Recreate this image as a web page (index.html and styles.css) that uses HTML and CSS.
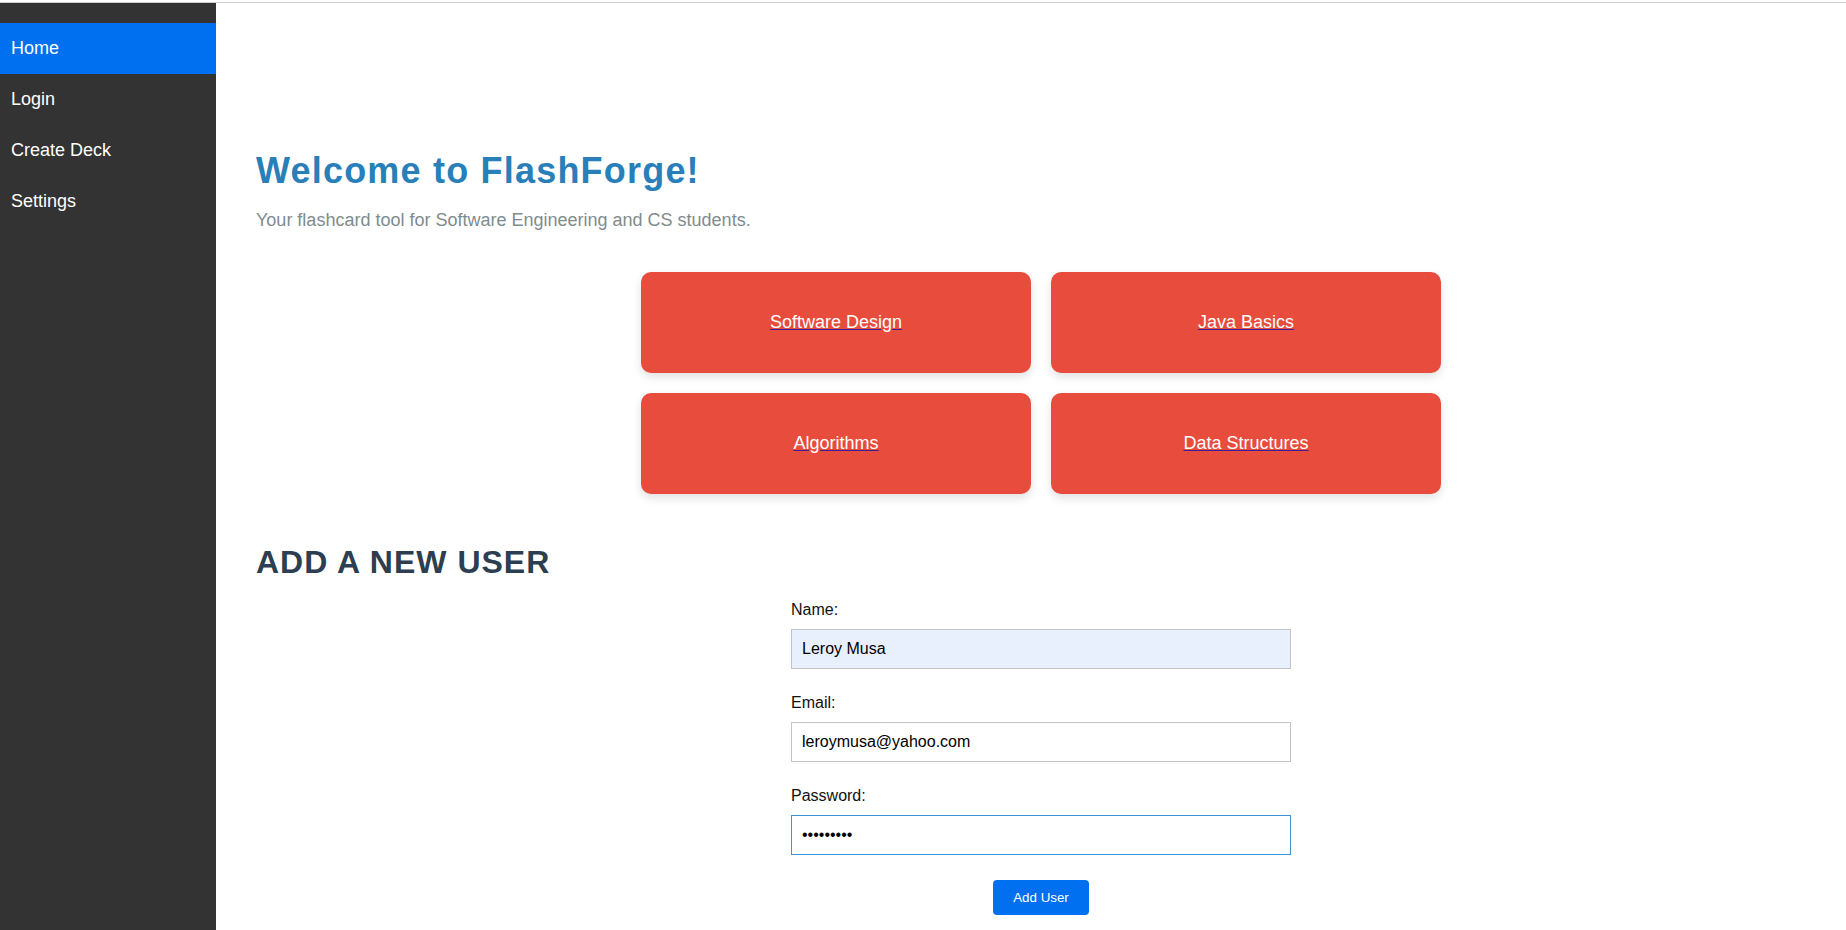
FILE: index.html
```html
<!DOCTYPE html>
<html lang="en">
<head>
<meta charset="utf-8">
<title>FlashForge</title>
<link rel="stylesheet" href="styles.css">
</head>
<body>
<div class="topline"></div>
<div class="layout">
  <nav class="sidebar">
    <a class="nav-item active" href="#">Home</a>
    <a class="nav-item" href="#">Login</a>
    <a class="nav-item" href="#">Create Deck</a>
    <a class="nav-item" href="#">Settings</a>
  </nav>
  <main class="main">
    <h1 class="title">Welcome to FlashForge!</h1>
    <p class="subtitle">Your flashcard tool for Software Engineering and CS students.</p>
    <div class="deck-grid">
      <a class="deck" href="#"><span class="deck-label">Software Design</span></a>
      <a class="deck" href="#"><span class="deck-label">Java Basics</span></a>
      <a class="deck" href="#"><span class="deck-label">Algorithms</span></a>
      <a class="deck" href="#"><span class="deck-label">Data Structures</span></a>
    </div>
    <h2 class="section-title">ADD A NEW USER</h2>
    <form class="user-form">
      <div class="form-group">
        <label class="form-label" for="name">Name:</label>
        <input class="form-input autofilled" id="name" type="text" value="Leroy Musa">
      </div>
      <div class="form-group">
        <label class="form-label" for="email">Email:</label>
        <input class="form-input" id="email" type="email" value="leroymusa@yahoo.com">
      </div>
      <div class="form-group">
        <label class="form-label" for="password">Password:</label>
        <input class="form-input focused" id="password" type="password" value="secret123">
      </div>
      <div class="form-actions">
        <button class="btn" type="button">Add User</button>
      </div>
    </form>
  </main>
</div>
</body>
</html>
```

FILE: styles.css
```css
* { box-sizing: border-box; }

html, body {
  margin: 0;
  padding: 0;
  background: #fff;
  font-family: "Liberation Sans", Arial, sans-serif;
}

.topline {
  height: 3px;
  border-bottom: 1px solid #cfcfcf;
}

.layout {
  display: flex;
  min-height: calc(100vh - 3px);
}

.sidebar {
  width: 216px;
  flex: 0 0 216px;
  background: #333333;
  padding-top: 20px;
  display: flex;
  flex-direction: column;
}

.nav-item {
  display: block;
  color: #ffffff;
  text-decoration: none;
  font-size: 18px;
  line-height: 21px;
  padding: 15px 11px;
}

.nav-item.active {
  background: #0070f0;
}

.main {
  flex: 1;
  padding: 147px 20px 0 40px;
}

.title {
  margin: 0;
  font-size: 36px;
  font-weight: bold;
  letter-spacing: 1.2px;
  color: #2980b9;
}

.subtitle {
  margin: 18px 0 0;
  font-size: 18px;
  color: #7f8c8d;
}

.deck-grid {
  width: 800px;
  margin: 41px auto 0;
  display: grid;
  grid-template-columns: 1fr 1fr;
  gap: 20px;
}

.deck {
  display: block;
  background: #e74c3c;
  border-radius: 10px;
  padding: 40px 10px;
  text-align: center;
  font-size: 18px;
  line-height: 21px;
  color: #ffffff;
  text-decoration: underline;
  text-decoration-color: #3a1e9a;
  box-shadow: 0 4px 10px rgba(0, 0, 0, 0.12);
}

.deck-label {
  color: #ffffff;
}

.section-title {
  margin: 50px 0 20px;
  font-size: 32px;
  font-weight: bold;
  letter-spacing: 1px;
  color: #2c3e50;
}

.user-form {
  width: 500px;
  margin: 0 auto;
}

.form-group {
  margin-bottom: 25px;
}

.form-label {
  display: block;
  font-size: 16px;
  color: #111;
  margin-bottom: 10px;
}

.form-input {
  display: block;
  width: 100%;
  height: 40px;
  padding: 0 10px;
  font-family: "Liberation Sans", Arial, sans-serif;
  font-size: 16px;
  color: #000;
  background: #fff;
  border: 1px solid #c4c4c4;
  border-radius: 0;
  outline: none;
}

.form-input.autofilled {
  background: #e8f0fe;
}

.form-input.focused {
  border-color: #3d95d8;
}

.form-actions {
  display: flex;
  justify-content: center;
}

.btn {
  background: #0070f0;
  color: #fff;
  border: none;
  border-radius: 4px;
  padding: 10px 20px;
  font-family: "Liberation Sans", Arial, sans-serif;
  font-size: 13.333px;
  line-height: 15px;
}
```
